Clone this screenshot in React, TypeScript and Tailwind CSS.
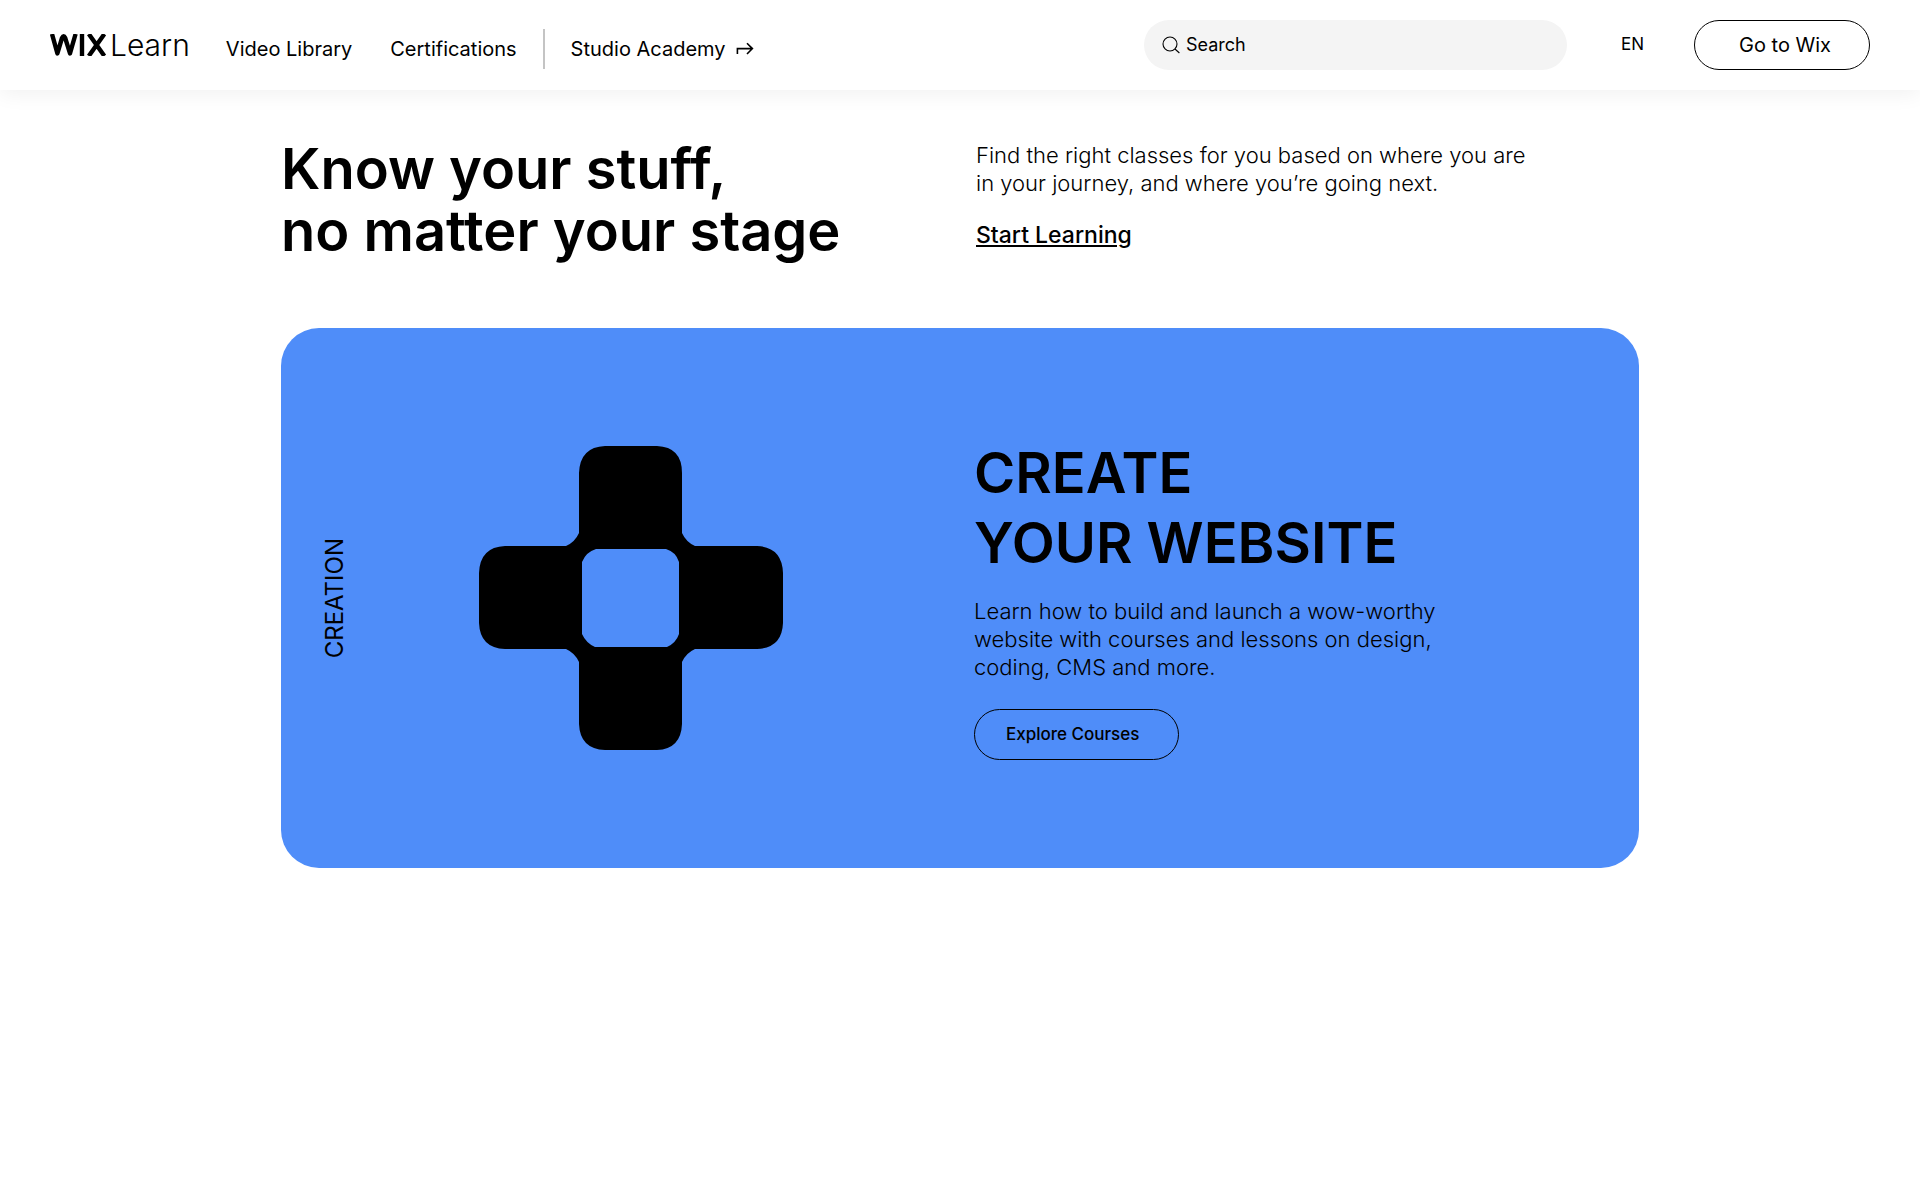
const navLinks = ['Video Library', 'Certifications'];

const Logo = () => (
  <a href="#home" aria-label="Wix Learn" className="flex items-center gap-1">
    <svg viewBox="0 0 56 22" className="h-[22px] w-14" fill="none" stroke="currentColor" strokeWidth="4.4" strokeLinejoin="round" aria-hidden="true">
      <path d="M2 0 7.4 19.4 12 4Q13.7 0.6 15.2 4L20 19.4 25.6 0" />
      <path d="M32 0V22" />
      <path d="M38.8 0 54.4 22M54.4 0 38.8 22" />
    </svg>
    <span className="text-3xl leading-8 font-light">Learn</span>
  </a>
);

const Header = () => (
  <header className="relative flex h-[90px] items-center justify-between bg-white px-[50px] shadow-[0_4px_20px_rgba(0,0,0,0.06)]">
    <div className="flex items-center">
      <Logo />
      <nav className="ml-9 flex items-center pt-2 text-xl">
        <div className="flex gap-[38px]">
          {navLinks.map((link) => (
            <a key={link} href="#courses">
              {link}
            </a>
          ))}
        </div>
        <span className="mx-[26px] h-10 w-0.5 bg-[#c4c4c4]" />
        <a href="#academy" className="flex items-center gap-2.5">
          Studio Academy
          <svg viewBox="0 0 18 14" className="h-3.5 w-[18px]" fill="none" stroke="currentColor" strokeWidth="1.6" aria-hidden="true">
            <path d="M1.4 12V6.6H16.4M11 1.2 16.4 6.6 11 12" />
          </svg>
        </a>
      </nav>
    </div>

    <div className="flex items-center">
      <label className="flex h-[50px] w-[423px] items-center gap-1.5 rounded-full bg-[#f4f4f4] px-[18px]">
        <svg viewBox="0 0 18 18" className="size-[18px]" fill="none" stroke="currentColor" strokeWidth="1.1" aria-hidden="true">
          <circle cx="8" cy="8" r="7" />
          <path d="M13 13 17.4 17" />
        </svg>
        <input
          type="text"
          placeholder="Search"
          aria-label="Search"
          className="min-w-0 flex-1 bg-transparent text-lg outline-none placeholder:text-black placeholder:opacity-100"
        />
      </label>
      <button className="ml-[54px] text-[17px]">EN</button>
      <a href="#wix" className="ml-[50px] flex h-[50px] w-44 items-center rounded-full border border-black pl-11 text-xl">
        Go to Wix
      </a>
    </div>
  </header>
);

const Intro = () => (
  <section className="grid grid-cols-2">
    <h1 className="text-[56px] leading-[62px] font-semibold">
      Know your stuff,
      <br />
      no matter your stage
    </h1>
    <div className="pt-[3px] pl-4">
      <p className="text-[22px] leading-7 font-light">
        Find the right classes for you based on where you are
        <br />
        in your journey, and where you’re going next.
      </p>
      <a href="#courses" className="mt-6 inline-block text-[23px] leading-7 font-medium underline">
        Start Learning
      </a>
    </div>
  </section>
);

const CrossShape = () => (
  <svg viewBox="0 0 304 304" className="size-[304px]" fill="black" fillRule="evenodd" aria-hidden="true">
    <path
      d="M126 0H178Q203 1 203 27V87Q207 96 216 100H278Q303 101 304 127V177Q303 202 278 203H216Q207 207 203 216V278Q202 303 178 304H126Q101 303 100 278V216Q96 207 87 203H26Q1 202 0 177V127Q1 101 26 100H87Q96 96 100 87V27Q101 1 126 0Z
        M117 103Q107 106 103 116V188Q107 197 116 201H188Q197 197 200 188V116Q197 106 187 103Z"
    />
  </svg>
);

const CourseCard = () => (
  <section id="courses" className="mt-[66px] grid min-h-[540px] grid-cols-2 items-center rounded-[38px] bg-[#4f8df9]">
    <div className="flex items-center pl-10">
      <p className="rotate-180 text-2xl leading-7 [writing-mode:vertical-rl]">CREATION</p>
      <div className="ml-[130px]">
        <CrossShape />
      </div>
    </div>
    <div className="pt-0.5 pl-3.5">
      <h2 className="text-[56px] leading-[70px] font-semibold">
        CREATE
        <br />
        YOUR WEBSITE
      </h2>
      <p className="mt-[19px] text-[22px] leading-7 font-light">
        Learn how to build and launch a wow-worthy
        <br />
        website with courses and lessons on design,
        <br />
        coding, CMS and more.
      </p>
      <button className="mt-7 flex h-[51px] w-[205px] items-center rounded-full border border-black pl-[31px] text-[17px] font-medium">
        Explore Courses
      </button>
    </div>
  </section>
);

const App = () => {
  return (
    <div className="min-h-screen bg-white font-[Inter,sans-serif] text-black">
      <Header />
      <main className="mx-auto max-w-[1358px] pt-[48px]">
        <Intro />
        <CourseCard />
      </main>
    </div>
  );
};

export default App;
